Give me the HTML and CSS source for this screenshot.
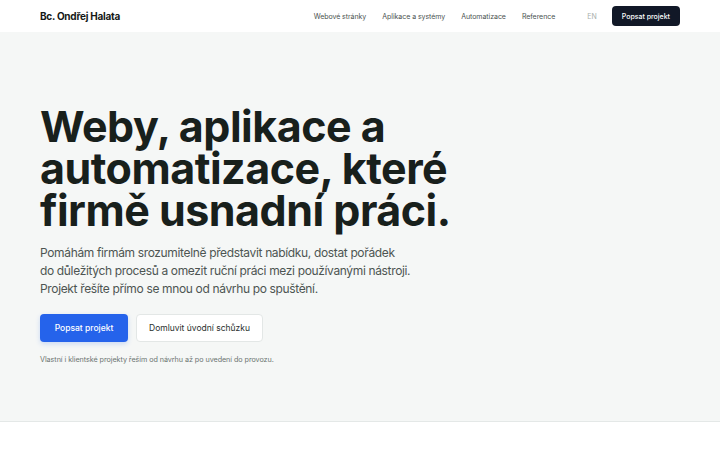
FILE: index.html
```html
<!DOCTYPE html>
<html lang="cs">
<head>
<meta charset="utf-8">
<title>Bc. Ondřej Halata</title>
<link rel="stylesheet" href="styles.css">
</head>
<body>
<header class="header">
  <div class="logo">Bc. Ondřej Halata</div>
  <nav class="nav">
    <a class="nav-link" href="#">Webové stránky</a>
    <a class="nav-link" href="#">Aplikace a systémy</a>
    <a class="nav-link" href="#">Automatizace</a>
    <a class="nav-link" href="#">Reference</a>
    <a class="nav-lang" href="#">EN</a>
    <a class="nav-cta" href="#">Popsat projekt</a>
  </nav>
</header>
<main class="hero">
  <h1 class="hero-title">Weby, aplikace a<br>automatizace, které<br>firmě usnadní práci.</h1>
  <p class="hero-lead">Pomáhám firmám srozumitelně představit nabídku, dostat pořádek<br>do důležitých procesů a omezit ruční práci mezi používanými nástroji.<br>Projekt řešíte přímo se mnou od návrhu po spuštění.</p>
  <div class="hero-actions">
    <a class="btn btn-primary" href="#">Popsat projekt</a>
    <a class="btn btn-secondary" href="#">Domluvit úvodní schůzku</a>
  </div>
  <p class="hero-note">Vlastní i klientské projekty řeším od návrhu až po uvedení do provozu.</p>
</main>
<section class="below"></section>
</body>
</html>
```
FILE: styles.css
```css
* { box-sizing: border-box; }
html, body { margin: 0; padding: 0; }
body {
  font-family: Inter, "Noto Sans", sans-serif;
  background: #ffffff;
  color: #1a1f1d;
}
a { text-decoration: none; color: inherit; }
.header {
  height: 32px;
  display: flex;
  align-items: center;
  justify-content: space-between;
  padding: 0 40px;
  background: #ffffff;
}
.logo {
  font-size: 10px;
  font-weight: 700;
  letter-spacing: -0.25px;
  color: #141816;
}
.nav {
  display: flex;
  align-items: center;
}
.nav-link {
  font-size: 7px;
  letter-spacing: -0.05px;
  color: #4a5250;
  margin-left: 16px;
}
.nav-lang {
  font-size: 7px;
  color: #a9afad;
  margin-left: 32px;
}
.nav-cta {
  margin-left: 15px;
  background: #111827;
  color: #ffffff;
  font-size: 7px;
  font-weight: 500;
  height: 20px;
  padding: 0 10px;
  display: flex;
  align-items: center;
  border-radius: 4px;
}
.hero {
  background: #f5f7f6;
  height: 390px;
  padding: 73px 40px 0;
  border-bottom: 1px solid #e4e8e7;
}
.hero-title {
  margin: 0;
  font-size: 43px;
  line-height: 42px;
  font-weight: 700;
  letter-spacing: -0.5px;
  color: #18201c;
}
.hero-lead {
  margin: 13px 0 0;
  font-size: 12px;
  line-height: 18px;
  letter-spacing: -0.35px;
  color: #4d5552;
}
.hero-actions {
  display: flex;
  gap: 8px;
  margin-top: 16px;
}
.btn {
  height: 28px;
  display: flex;
  align-items: center;
  justify-content: center;
  border-radius: 4px;
  font-size: 8.5px;
  font-weight: 500;
}
.btn-primary {
  width: 88px;
  background: #2563eb;
  color: #ffffff;
  box-shadow: 0 2px 5px rgba(37, 99, 235, 0.2);
}
.btn-secondary {
  width: 127px;
  background: #ffffff;
  color: #2a302e;
  font-weight: 400;
  border: 1px solid #e3e7e6;
}
.hero-note {
  margin: 13px 0 0;
  font-size: 7.2px;
  letter-spacing: -0.05px;
  color: #6b7370;
}
.below {
  height: 40px;
  background: #ffffff;
}
```
